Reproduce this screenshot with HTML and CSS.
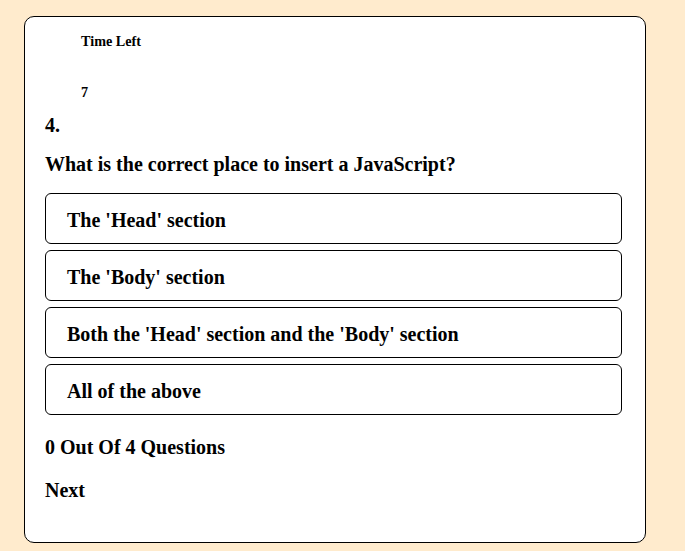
FILE: index.html
```html
<!DOCTYPE html>
<html>
<head>
<meta charset="utf-8">
<link rel="stylesheet" href="styles.css">
</head>
<body>
<div class="card">
  <div class="timer">
    <h5 class="timer-label">Time Left</h5>
    <h5 class="timer-value">7</h5>
  </div>
  <h3 class="q-num">4.</h3>
  <h3 class="q-text">What is the correct place to insert a JavaScript?</h3>
  <div class="options">
    <div class="option">The 'Head' section</div>
    <div class="option">The 'Body' section</div>
    <div class="option">Both the 'Head' section and the 'Body' section</div>
    <div class="option">All of the above</div>
  </div>
  <h3 class="score">0 Out Of 4 Questions</h3>
  <h3 class="next">Next</h3>
</div>
</body>
</html>
```
FILE: styles.css
```css
html, body {
  margin: 0;
  padding: 0;
}
body {
  background: #ffebcd;
  font-family: "Liberation Serif", "Times New Roman", serif;
  color: #000;
  padding: 16px 0 0 24px;
  height: 551px;
  box-sizing: border-box;
}
.card {
  width: 622px;
  height: 527px;
  box-sizing: border-box;
  background: #fff;
  border: 1px solid #000;
  border-radius: 10px;
  padding: 16px 23px 0 20px;
}
.timer {
  padding-left: 36px;
}
.timer h5 {
  margin: 0;
  font-size: 14.2px;
  font-weight: bold;
  line-height: 16px;
}
.timer-value {
  margin-top: 35px !important;
}
h3 {
  margin: 0;
  font-size: 20px;
  font-weight: bold;
  line-height: 23px;
}
.q-num {
  margin-top: 13.5px;
}
.q-text {
  margin-top: 16.5px;
}
.options {
  margin-top: 17px;
  display: flex;
  flex-direction: column;
  gap: 6px;
}
.option {
  border: 1px solid #000;
  border-radius: 6px;
  height: 51px;
  box-sizing: border-box;
  padding: 15px 21px 0 21px;
  font-size: 20px;
  font-weight: bold;
  line-height: 23px;
}
.score {
  margin-top: 21px;
}
.next {
  margin-top: 19.5px;
}
```
